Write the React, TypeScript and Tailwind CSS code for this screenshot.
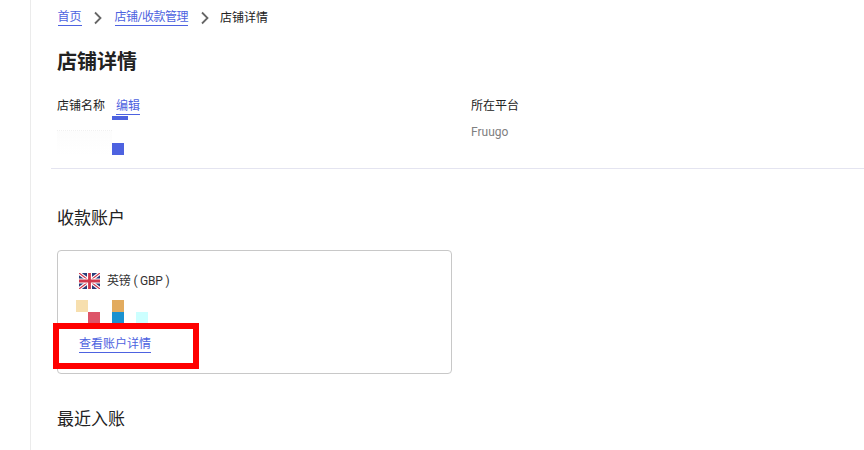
import React from 'react';

const font = { fontFamily: '"Roboto", "Noto Sans CJK SC", sans-serif' };

const UkFlag = () => (
  <svg width="21" height="16" viewBox="0 0 21 16">
    <rect width="21" height="16" rx="1" fill="#2a3b78" />
    <path d="M0 0 L21 16 M21 0 L0 16" stroke="#fff" strokeWidth="3.4" />
    <path d="M0 0 L21 16 M21 0 L0 16" stroke="#d0374c" strokeWidth="1.2" />
    <path d="M10.5 0 V16 M0 8 H21" stroke="#fff" strokeWidth="5" />
    <path d="M10.5 0 V16 M0 8 H21" stroke="#d0374c" strokeWidth="2.8" />
  </svg>
);

const Chevron = () => (
  <svg width="10" height="14" viewBox="0 0 10 14" fill="none">
    <path d="M2 1.5 L7.5 7 L2 12.5" stroke="#666" strokeWidth="1.8" />
  </svg>
);

const accountCells = [
  'bg-[#f7dfae]', '', '', 'bg-[#e2ab5f]', '', '',
  '', 'bg-[#dd5468]', '', 'bg-[#1b92d0]', '', 'bg-[#ccffff]',
];

export default function App() {
  return (
    <div className="w-[864px] h-[450px] overflow-hidden bg-white pl-[30px]" style={font}>
      <div className="h-full border-l border-[#ebebeb] pl-5">
        <nav className="flex items-center h-[36px] pl-[6.5px] text-xs text-[#222]">
          <a className="text-[#4d62e0] border-b border-[#4d62e0] leading-[15px]">首页</a>
          <span className="ml-[11px] mr-[12px] flex"><Chevron /></span>
          <a className="text-[#4d62e0] border-b border-[#4d62e0] leading-[15px] tracking-[-0.5px]">店铺/收款管理</a>
          <span className="ml-[12px] mr-[10px] flex"><Chevron /></span>
          <span>店铺详情</span>
        </nav>

        <h1 className="pl-[6px] mt-[12px] text-xl leading-[28px] font-bold text-[#222]">店铺详情</h1>

        <div className="flex pl-[6px] mt-[22px] h-[71px] border-b border-[#e4e4f0]">
          <div className="w-[414px]">
            <div className="flex text-xs leading-[16px] text-[#222]">
              <span>店铺名称</span>
              <a className="ml-[11px] text-[#4d62e0] border-b border-[#4d62e0]">编辑</a>
            </div>
            <div className="ml-[55px] mt-[0.5px] w-4 h-1 bg-[#4d62e0]" />
            <div className="flex items-end mt-[10px]">
              <div className="w-[55px] h-[25px] border-t border-dotted border-[#f0f0f0] bg-[linear-gradient(#fcfcfc,#fff)]" />
              <div className="w-3 h-3 bg-[#4d62e0]" />
            </div>
          </div>
          <div className="text-xs">
            <div className="leading-[16px] text-[#222]">所在平台</div>
            <div className="mt-[10px] leading-[16px] text-[#808080]">Fruugo</div>
          </div>
        </div>

        <h2 className="pl-[6px] mt-[37px] text-[17px] leading-[24px] text-[#222]">收款账户</h2>

        <div className="relative ml-[6px] mt-[20px] w-[395px] h-[124px] border border-[#c8c8c8] rounded pl-[21px] pt-[22px]">
          <div className="flex items-center text-xs text-[#333]">
            <UkFlag />
            <span className="ml-[7px] tracking-[-0.2px]">英镑 ( GBP )</span>
          </div>
          <div className="ml-[-3px] mt-[11px] grid grid-cols-[repeat(6,12px)] auto-rows-[12px]">
            {accountCells.map((c, i) => (
              <div key={i} className={c} />
            ))}
          </div>
          <a className="inline-block mt-[12px] text-xs leading-[16px] text-[#4d62e0] border-b border-[#4d62e0]">查看账户详情</a>
          {/* annotation box drawn over the card */}
          <div className="absolute left-[-5px] top-[72px] w-[146px] h-[46px] border-[6px] border-[#ff0000]" />
        </div>

        <h2 className="pl-[6px] mt-[33px] text-[17px] leading-[24px] text-[#222]">最近入账</h2>
      </div>
    </div>
  );
}
